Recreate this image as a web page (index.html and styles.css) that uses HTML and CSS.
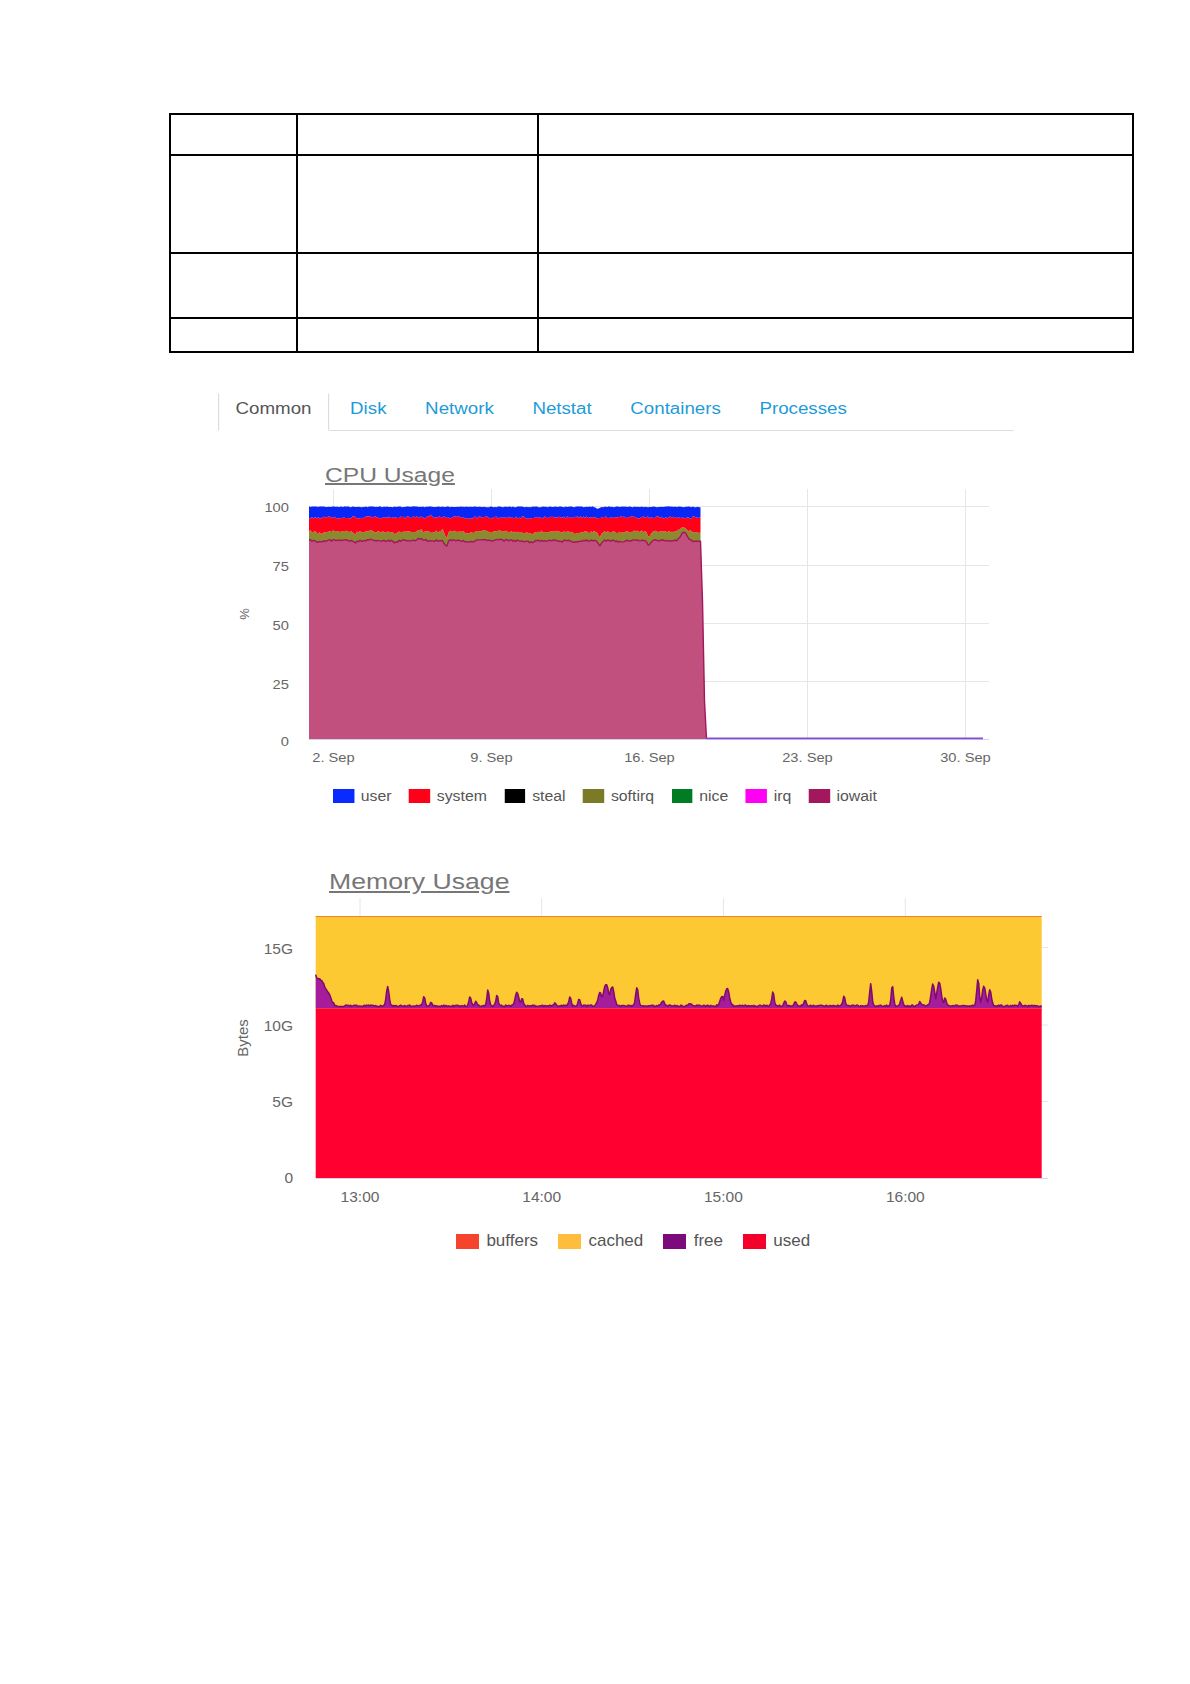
FILE: index.html
```html
<!DOCTYPE html>
<html lang="en">
<head>
<meta charset="utf-8">
<title>Monitoring</title>
<link rel="stylesheet" href="styles.css">
</head>
<body>
<div class="page">
  <table class="doc-table">
    <colgroup><col class="c1"><col class="c2"><col class="c3"></colgroup>
    <tr class="r1"><td></td><td></td><td></td></tr>
    <tr class="r2"><td></td><td></td><td></td></tr>
    <tr class="r3"><td></td><td></td><td></td></tr>
    <tr class="r4"><td></td><td></td><td></td></tr>
  </table>

  <ul class="tabs">
    <li class="tab tab-active"><a>Common</a></li>
    <li class="tab"><a>Disk</a></li>
    <li class="tab"><a>Network</a></li>
    <li class="tab"><a>Netstat</a></li>
    <li class="tab"><a>Containers</a></li>
    <li class="tab"><a>Processes</a></li>
  </ul>

  <h3 class="chart-title chart-title-cpu"><a>CPU Usage</a></h3>
  <svg class="plot plot-cpu" width="780" height="290" viewBox="220 485 780 290">
    <g class="grid">
      <line x1="333.5" y1="488" x2="333.5" y2="738"/>
      <line x1="491.5" y1="488" x2="491.5" y2="738"/>
      <line x1="649.5" y1="488" x2="649.5" y2="738"/>
      <line x1="807.5" y1="488" x2="807.5" y2="738"/>
      <line x1="965.5" y1="488" x2="965.5" y2="738"/>
      <line x1="309" y1="505.5" x2="989" y2="505.5"/>
      <line x1="309" y1="564.5" x2="989" y2="564.5"/>
      <line x1="309" y1="622.5" x2="989" y2="622.5"/>
      <line x1="309" y1="680.5" x2="989" y2="680.5"/>
    </g>
    <line class="axis" x1="309" y1="738.5" x2="989" y2="738.5"/>
    <path id="cpu-iowait" class="s-iowait" d="M309,738 L309,540 L700,540 L706,738 Z"/>
    <path id="cpu-softirq" class="s-softirq" d="M309,531 L700,531 L700,540 L309,540 Z"/>
    <path id="cpu-system" class="s-system" d="M309,517 L700,517 L700,531 L309,531 Z"/>
    <path id="cpu-user" class="s-user" d="M309,507 L700,507 L700,517 L309,517 Z"/>
    <path id="cpu-iowait-line" class="l-iowait" d="M309,540 L700,540 L706,738"/>
    <line class="l-zero" x1="706" y1="737.3" x2="983" y2="737.3"/>
    <g class="tick tick-y"><text x="289" y="511">100</text></g>
    <g class="tick tick-y"><text x="289" y="570.5">75</text></g>
    <g class="tick tick-y"><text x="289" y="628.6">50</text></g>
    <g class="tick tick-y"><text x="289" y="687.6">25</text></g>
    <g class="tick tick-y"><text x="289" y="745.3">0</text></g>
    <g class="tick tick-x"><text x="333.5" y="761">2. Sep</text></g>
    <g class="tick tick-x"><text x="491.5" y="761">9. Sep</text></g>
    <g class="tick tick-x"><text x="649.5" y="761">16. Sep</text></g>
    <g class="tick tick-x"><text x="807.5" y="761">23. Sep</text></g>
    <g class="tick tick-x"><text x="965.5" y="761">30. Sep</text></g>
    <text class="axis-title" x="244" y="617.5" transform="rotate(-90 244 613)">%</text>
  </svg>
  <ul class="legend legend-cpu">
    <li class="legend-item"><span class="swatch sw-user"></span>user</li>
    <li class="legend-item"><span class="swatch sw-system"></span>system</li>
    <li class="legend-item"><span class="swatch sw-steal"></span>steal</li>
    <li class="legend-item"><span class="swatch sw-softirq"></span>softirq</li>
    <li class="legend-item"><span class="swatch sw-nice"></span>nice</li>
    <li class="legend-item"><span class="swatch sw-irq"></span>irq</li>
    <li class="legend-item"><span class="swatch sw-iowait"></span>iowait</li>
  </ul>

  <h3 class="chart-title chart-title-mem"><a>Memory Usage</a></h3>
  <svg class="plot plot-mem" width="840" height="317" viewBox="215 893 840 317">
    <g class="grid">
      <line x1="360" y1="897" x2="360" y2="1177"/>
      <line x1="541.7" y1="897" x2="541.7" y2="1177"/>
      <line x1="723.4" y1="897" x2="723.4" y2="1177"/>
      <line x1="905.3" y1="897" x2="905.3" y2="1177"/>
      <line x1="315.7" y1="946.5" x2="1048" y2="946.5"/>
      <line x1="315.7" y1="1024" x2="1048" y2="1024"/>
      <line x1="315.7" y1="1100.5" x2="1048" y2="1100.5"/>
    </g>
    <line class="axis" x1="315.7" y1="1177.5" x2="1048" y2="1177.5"/>
    <rect class="s-cached" x="315.7" y="915" width="726" height="95"/>
    <path id="mem-free" class="s-free" d="M315.7,1005 L1041.7,1005 L1041.7,1007.5 L315.7,1007.5 Z"/>
    <rect class="s-used" x="315.7" y="1007.5" width="726" height="169.5"/>
    <path id="mem-free-line" class="l-free" d="M315.7,1005 L1041.7,1005"/>
    <line class="l-buffers" x1="315.7" y1="915.5" x2="1041.7" y2="915.5"/>
    <g class="mtick-y">
      <text x="293" y="952.6">15G</text>
      <text x="293" y="1029.6">10G</text>
      <text x="293" y="1105.8">5G</text>
      <text x="293" y="1181.8">0</text>
    </g>
    <g class="mtick-x">
      <text x="360" y="1200.8">13:00</text>
      <text x="541.7" y="1200.8">14:00</text>
      <text x="723.4" y="1200.8">15:00</text>
      <text x="905.3" y="1200.8">16:00</text>
    </g>
    <text class="axis-title axis-title-mem" x="243" y="1042" transform="rotate(-90 243 1037)">Bytes</text>
  </svg>
  <ul class="legend legend-mem">
    <li class="legend-item"><span class="swatch sw-buffers"></span>buffers</li>
    <li class="legend-item"><span class="swatch sw-cached"></span>cached</li>
    <li class="legend-item"><span class="swatch sw-free"></span>free</li>
    <li class="legend-item"><span class="swatch sw-used"></span>used</li>
  </ul>
</div>
<script src="script.js"></script>
</body>
</html>
```

FILE: styles.css
```css
html, body {
  margin: 0;
  padding: 0;
  background: #fff;
}

body {
  font-family: "Liberation Sans", Arial, sans-serif;
  color: #333;
}

.page {
  padding-top: 113px;
  padding-bottom: 40px;
}

/* document table */
.doc-table {
  margin-left: 169px;
  width: 963px;
  table-layout: fixed;
  border-collapse: collapse;
}
.doc-table .c1 { width: 127px; }
.doc-table .c2 { width: 241px; }
.doc-table .c3 { width: 595px; }
.doc-table td {
  border: 2px solid #000;
  padding: 0;
}
.doc-table .r1 { height: 41px; }
.doc-table .r2 { height: 98px; }
.doc-table .r3 { height: 65px; }
.doc-table .r4 { height: 34px; }

/* tabs */
.tabs {
  display: flex;
  list-style: none;
  margin: 40px 0 0 218px;
  padding: 0;
  width: 680px;
  border-bottom: 1px solid #ddd;
  font-size: 16px;
  line-height: 18px;
  transform: scaleX(1.17);
  transform-origin: 0 0;
}
.tab {
  margin: 0 3px -1px 0;
}
.tab a {
  display: block;
  padding: 6px 14px 12px;
  border: 1px solid transparent;
  color: #1e9bd7;
  text-decoration: none;
}
.tab-active a {
  color: #555;
  border-color: transparent #ddd #fff #ddd;
  background: #fff;
}

/* chart titles */
.chart-title {
  font-weight: normal;
  margin-bottom: 0;
}
.chart-title a {
  display: inline-block;
  color: #777;
  text-decoration: underline;
  transform-origin: 0 50%;
}
.chart-title-cpu {
  margin: 33px 0 0 325px;
  font-size: 20px;
  line-height: 22px;
}
.chart-title-cpu a { transform: scaleX(1.23); }
.chart-title-mem {
  margin: 65px 0 0 329px;
  font-size: 22px;
  line-height: 25px;
}
.chart-title-mem a { transform: scaleX(1.21); }

/* plots */
.plot {
  display: block;
  overflow: visible;
}
.plot-cpu { margin-left: 220px; }
.plot-mem { margin-left: 215px; }

.plot text {
  font-family: "Liberation Sans", Arial, sans-serif;
  fill: #666;
}
.grid line {
  stroke: #e6e6e6;
  stroke-width: 1;
}
.axis {
  stroke: #ccd6eb;
  stroke-width: 1;
}

.plot-cpu .tick text {
  font-size: 13px;
}
.plot-cpu .tick {
  transform-box: fill-box;
  transform: scaleX(1.13);
}
.plot-cpu .tick-y { transform-origin: 100% 50%; }
.plot-cpu .tick-y text { text-anchor: end; }
.plot-cpu .tick-x { transform-origin: 50% 50%; }
.plot-cpu .tick-x text { text-anchor: middle; }
.axis-title {
  font-size: 13px;
  text-anchor: middle;
}
.axis-title-mem {
  font-size: 15px;
}

.s-user { fill: #0a26f6; }
.s-system { fill: #ff0018; }
.s-softirq { fill: #8c8a2e; }
.s-iowait { fill: #c2507e; }
.l-iowait {
  fill: none;
  stroke: #a2165d;
  stroke-width: 1.4;
  stroke-linejoin: round;
}
.l-zero {
  stroke: #8a4ccc;
  stroke-width: 1.8;
}

.mtick-y text {
  font-size: 15.5px;
  text-anchor: end;
}
.mtick-x text {
  font-size: 15.5px;
  text-anchor: middle;
}
.s-cached { fill: #fdc932; }
.s-used { fill: #ff0031; }
.s-free { fill: #a51d9b; }
.l-free {
  fill: none;
  stroke: #7d0b6c;
  stroke-width: 1.5;
  stroke-linejoin: round;
}
.l-buffers {
  stroke: #ff7a3a;
  stroke-width: 1.2;
}

/* legends */
.legend {
  display: flex;
  width: max-content;
  list-style: none;
  padding: 0;
  color: #555;
  white-space: nowrap;
}
.legend-item {
  display: flex;
  align-items: center;
}
.swatch {
  display: block;
  flex: none;
}
.legend-cpu {
  margin: 12px 0 0 332.6px;
  font-size: 14px;
  line-height: 16px;
  gap: 15.6px;
  transform: scaleX(1.13);
  transform-origin: 0 0;
}
.legend-cpu .legend-item { gap: 6px; }
.legend-cpu .swatch {
  width: 18.5px;
  height: 14px;
}
.legend-mem {
  margin: 20px 0 0 456px;
  font-size: 17px;
  line-height: 20px;
  gap: 20px;
}
.legend-mem .legend-item { gap: 7.4px; }
.legend-mem .swatch {
  width: 23px;
  height: 15px;
}

.sw-user { background: #0a2bff; }
.sw-system { background: #ff0019; }
.sw-steal { background: #000; }
.sw-softirq { background: #7b7a26; }
.sw-nice { background: #007c24; }
.sw-irq { background: #ff00f5; }
.sw-iowait { background: #a3185c; }
.sw-buffers { background: #f5432c; }
.sw-cached { background: #ffbd3d; }
.sw-free { background: #7c0a7c; }
.sw-used { background: #f5002a; }
```

FILE: script.js
```js
(function () {
  var seed = 12345;
  function rnd() { seed = (seed * 16807) % 2147483647; return (seed - 1) / 2147483646; }
  function jit(a) { return (rnd() * 2 - 1) * a; }
  function g(x, c, s, h) { var d = (x - c) / s; return h * Math.exp(-d * d); }
  function sum(x, list) {
    var t = 0;
    for (var i = 0; i < list.length; i++) t += g(x, list[i][0], list[i][1], list[i][2]);
    return t;
  }
  function peak(x, list) {
    var t = 0;
    for (var i = 0; i < list.length; i++) t = Math.max(t, g(x, list[i][0], list[i][1], list[i][2]));
    return t;
  }
  function f(n) { return n.toFixed(1); }
  function line(xs, ys) {
    var s = '';
    for (var i = 0; i < xs.length; i++) s += (i ? ' L' : 'M') + f(xs[i]) + ',' + f(ys[i]);
    return s;
  }
  function back(xs, ys) {
    var s = '';
    for (var i = xs.length - 1; i >= 0; i--) s += ' L' + f(xs[i]) + ',' + f(ys[i]);
    return s;
  }
  function set(id, d) {
    var el = document.getElementById(id);
    if (el) el.setAttribute('d', d);
  }

  /* CPU usage, stacked */
  var xs = [];
  for (var x = 309; x <= 701; x += 1.5) xs.push(x);
  var ioF = [[318, 4, 1], [355, 3, 2], [372, 5, -1], [395, 3, 2.5], [420, 4, -1.5], [446, 2, 6],
    [470, 6, 1], [500, 5, -0.5], [530, 6, 1.5], [560, 4, 1], [575, 4, 1.5], [600, 2, 5],
    [620, 5, 1], [649, 2.5, 4.5], [684, 4, -9], [696, 3, 1]];
  var io = [], ol = [], rd = [], bl = [];
  for (var i = 0; i < xs.length; i++) {
    var X = xs[i];
    var y = 539.5 + jit(0.9) + sum(X, ioF);
    io.push(y);
    ol.push(y - 8.8 + jit(0.9) - g(X, 443, 2, 3) + g(X, 684, 4, 4));
    rd.push(516.5 + jit(1.3) + g(X, 430, 3, -2) + g(X, 598, 2, 1.5));
    bl.push(505.8 + jit(0.5) + g(X, 598, 2, 2));
  }
  set('cpu-user', line(xs, bl) + back(xs, rd) + ' Z');
  set('cpu-system', line(xs, rd) + back(xs, ol) + ' Z');
  set('cpu-softirq', line(xs, ol) + back(xs, io) + ' Z');
  var drop = ' L702.5,600 L704.5,700 L706.5,738';
  set('cpu-iowait', 'M309,738 L' + line(xs, io).slice(1) + drop + ' Z');
  set('cpu-iowait-line', line(xs, io) + drop);

  /* Memory usage */
  var mx = [];
  for (var m = 315.7; m <= 1041.8; m += 1) mx.push(m);
  var sp = [[387.7, 1.8, 20], [424, 1.6, 9], [431, 1.3, 4], [470, 1.6, 9], [476, 1.3, 5], [488, 1.5, 16],
    [497, 1.5, 11], [517, 2.5, 13], [522, 1.8, 7], [555, 1.5, 3], [570, 1.5, 9], [579, 1.5, 7],
    [600, 2.5, 14], [606, 3.5, 22], [612, 3, 19], [637, 1.8, 19], [663, 2, 5], [690, 1.5, 3],
    [722, 2.5, 10], [727, 3, 18], [773, 1.5, 15], [785, 1.5, 5], [795, 1.5, 4], [805, 1.8, 5],
    [844, 1.5, 10], [870.7, 1.5, 22], [892.3, 1.5, 20], [901.7, 1.4, 8], [920, 1.5, 4],
    [933, 2.5, 22], [939, 2.8, 24], [945, 1.5, 8], [978, 1.8, 26], [984, 2.5, 20], [990, 2, 16],
    [1020, 1.2, 4]];
  var fr = [];
  for (var k = 0; k < mx.length; k++) {
    var Xm = mx[k];
    var base;
    if (Xm < 321) base = 975 + (Xm - 315.7) * 0.6 + jit(1.5);
    else if (Xm < 335) base = 978 + (Xm - 321) * (27 / 14) + jit(1);
    else base = 1004.8 + jit(0.8);
    var v = base - peak(Xm, sp);
    fr.push(Math.min(v, 1007));
  }
  set('mem-free', line(mx, fr) + ' L1041.7,1007.5 L315.7,1007.5 Z');
  set('mem-free-line', line(mx, fr));
})();
```
